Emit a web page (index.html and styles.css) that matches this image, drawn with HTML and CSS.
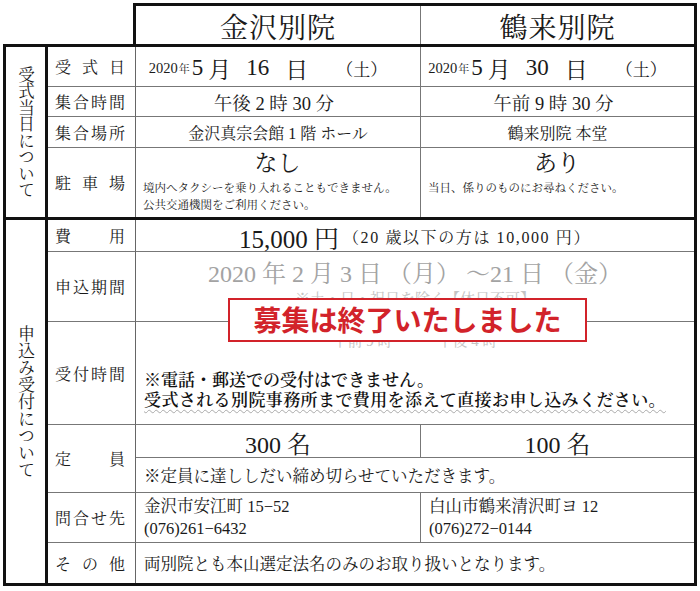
FILE: index.html
```html
<!DOCTYPE html>
<html lang="ja">
<head>
<meta charset="utf-8">
<title>受式・申込み案内</title>
<link rel="stylesheet" href="styles.css">
</head>
<body>
<div class="sheet">
  <div class="head">
    <div class="hcell">金沢別院</div>
    <div class="hcell last">鶴来別院</div>
  </div>

  <section class="sec sec1">
    <div class="vlabel">受式当日について</div>

    <div class="lab r1"><span>受</span><span>式</span><span>日</span></div>
    <div class="cell c3 r1 date"><span class="yr">2020</span><span class="nen">年</span><span class="big n">5</span><span class="big k1">月</span><span class="big n2">16</span><span class="big k2">日</span><span class="dow">（土）</span></div>
    <div class="cell c4 r1 date"><span class="yr">2020</span><span class="nen">年</span><span class="big n">5</span><span class="big k1">月</span><span class="big n2">30</span><span class="big k2">日</span><span class="dow">（土）</span></div>

    <div class="lab r2"><span>集</span><span>合</span><span>時</span><span>間</span></div>
    <div class="cell c3 r2 time">午後 2 時 30 分</div>
    <div class="cell c4 r2 time">午前 9 時 30 分</div>

    <div class="lab r3"><span>集</span><span>合</span><span>場</span><span>所</span></div>
    <div class="cell c3 r3 place">金沢真宗会館 1 階 ホール</div>
    <div class="cell c4 r3 place">鶴来別院 本堂</div>

    <div class="lab r4 nb"><span>駐</span><span>車</span><span>場</span></div>
    <div class="cell c3 r4 nb park">
      <div class="yn">なし</div>
      <div class="note">境内へタクシーを乗り入れることもできません。<br>公共交通機関をご利用ください。</div>
    </div>
    <div class="cell c4 r4 nb park">
      <div class="yn">あり</div>
      <div class="note">当日、係りのものにお尋ねください。</div>
    </div>
  </section>

  <section class="sec sec2">
    <div class="vlabel">申込み受付について</div>

    <div class="lab s1"><span>費</span><span>用</span></div>
    <div class="cell wide s1 fee"><span class="amt">15,000 円</span><span class="sub">（20 歳以下の方は 10,000 円）</span></div>

    <div class="lab s2"><span>申</span><span>込</span><span>期</span><span>間</span></div>
    <div class="cell wide s2 period">
      <div class="pdate">2020 年 2 月 3 日 （月） ～21 日 （金）</div>
      <div class="faint">※土・日・祝日を除く【休日不可】</div>
    </div>

    <div class="lab s3"><span>受</span><span>付</span><span>時</span><span>間</span></div>
    <div class="cell wide s3 hours">
      <div class="faint ftime">午前 9 時　～　午後 4 時</div>
      <div class="warn">※電話・郵送での受付はできません。<br><span class="wavy">受式される別院事務所まで費用を添えて直接お申し込みください。</span></div>
    </div>

    <div class="lab s4"><span>定</span><span>員</span></div>
    <div class="cell c3 s4a cap">300 名</div>
    <div class="cell c4 s4a cap">100 名</div>
    <div class="cell wide s4b text">※定員に達ししだい締め切らせていただきます。</div>

    <div class="lab s5"><span>問</span><span>合</span><span>せ</span><span>先</span></div>
    <div class="cell c3 s5 text addr">金沢市安江町 15−52<br>(076)261−6432</div>
    <div class="cell c4 s5 text addr">白山市鶴来清沢町ヨ 12<br>(076)272−0144</div>

    <div class="lab s6 nb"><span>そ</span><span>の</span><span>他</span></div>
    <div class="cell wide s6 nb text">両別院とも本山選定法名のみのお取り扱いとなります。</div>

    <div class="closed">募集は終了いたしました</div>
  </section>
</div>
</body>
</html>
```

FILE: styles.css
```css
* { box-sizing: border-box; }
html, body { margin: 0; padding: 0; background: #fff; }
body {
  font-family: "Liberation Serif", "Noto Serif CJK JP", "Noto Sans CJK JP", serif;
  color: #1a1a1a;
}
.sheet {
  padding: 3px 0 0 3px;
  width: 700px;
}
.head {
  display: flex;
  margin-left: 130px;
  width: 564px;
  height: 41px;
  border: 3px solid #111;
  border-bottom: none;
}
.hcell {
  width: 285px;
  border-right: 1px solid #777;
  display: flex;
  align-items: center;
  justify-content: center;
  font-size: 28px;
  letter-spacing: 1px;
  padding-top: 2px;
}
.hcell.last { width: 273px; border-right: none; }

.sec {
  position: relative;
  display: grid;
  width: 694px;
  grid-template-columns: 42px 88px 285px 273px;
  border: 3px solid #111;
}
.sec1 {
  grid-template-rows: 40px 30px 31px 69px;
  border-bottom: none;
}
.sec2 {
  grid-template-rows: 32px 70px 103px 33px 35px 50px 40px;
}
.vlabel {
  grid-column: 1;
  grid-row: 1 / -1;
  border-right: 3px solid #111;
  writing-mode: vertical-rl;
  text-orientation: upright;
  font-size: 16.5px;
  display: flex;
  align-items: center;
  justify-content: center;
  padding-right: 2px;
}
.sec2 .vlabel { font-size: 17px; }

.lab {
  grid-column: 2;
  border-right: 1px solid #666;
  border-bottom: 1px solid #777;
  display: flex;
  align-items: center;
  justify-content: space-between;
  padding: 0 10px 0 7px;
  font-size: 16px;
}
.cell {
  border-bottom: 1px solid #777;
  display: flex;
  align-items: center;
}
.c3 { grid-column: 3; border-right: 1px solid #777; }
.c4 { grid-column: 4; }
.wide { grid-column: 3 / 5; }
.nb { border-bottom: none; }

.r1 { grid-row: 1; } .r2 { grid-row: 2; } .r3 { grid-row: 3; } .r4 { grid-row: 4; }
.s1 { grid-row: 1; } .s2 { grid-row: 2; } .s3 { grid-row: 3; }
.s4 { grid-row: 4 / 6; } .s4a { grid-row: 4; } .s4b { grid-row: 5; }
.s5 { grid-row: 6; } .s6 { grid-row: 7; }

.date { justify-content: center; padding-right: 20px; padding-top: 3px; white-space: nowrap; }
.date .yr { font-size: 14.5px; }
.date .nen { font-size: 11px; margin: 0 2px 0 1px; }
.date .big { font-size: 23px; }
.date .k1 { margin-left: 5px; }
.date .n2 { margin-left: 15px; }
.date .k2 { margin-left: 16px; }
.date .dow { font-size: 17px; margin-left: 28px; }

.time { justify-content: center; font-size: 18.5px; padding-right: 8px; }
.place { justify-content: center; font-size: 16px; }

.park {
  flex-direction: column;
  align-items: stretch;
  padding: 2px 8px 0 7px;
}
.yn { text-align: center; font-size: 23px; line-height: 28px; }
.note { font-size: 11.5px; line-height: 17px; margin-top: 2px; }

.fee { justify-content: center; padding-top: 2px; }
.fee .amt { font-size: 25px; }
.fee .sub { font-size: 16px; margin-left: 4px; letter-spacing: 1.6px; }

.period {
  flex-direction: column;
  align-items: center;
  justify-content: flex-start;
  padding-top: 7px;
}
.pdate { font-size: 24px; color: #a3a3a3; line-height: 31px; }
.faint { color: #c4c4c4; font-size: 15px; line-height: 18px; }

.hours {
  flex-direction: column;
  align-items: flex-start;
  justify-content: flex-start;
  padding: 0 8px 0 8px;
}
.ftime { align-self: center; margin-top: 10px; }
.warn {
  margin-top: 21px;
  font-size: 17px;
  line-height: 20px;
  font-weight: 600;
  color: #111;
}
.wavy {
  letter-spacing: 0.4px;
  text-decoration: underline wavy #aaaaaa;
  text-decoration-thickness: 1px;
  text-underline-offset: 3px;
}

.cap { justify-content: center; font-size: 24px; padding-top: 2px; }
.text { font-size: 16.5px; padding-left: 8px; }
.addr { line-height: 22px; align-items: center; }

.closed {
  position: absolute;
  left: 222px;
  top: 78px;
  width: 359px;
  height: 44px;
  background: #fff;
  border: 2px solid #d2232a;
  color: #d2232a;
  font-family: "Noto Sans CJK JP", sans-serif;
  font-weight: bold;
  font-size: 28px;
  line-height: 38px;
  text-align: center;
  letter-spacing: 0;
}
```
